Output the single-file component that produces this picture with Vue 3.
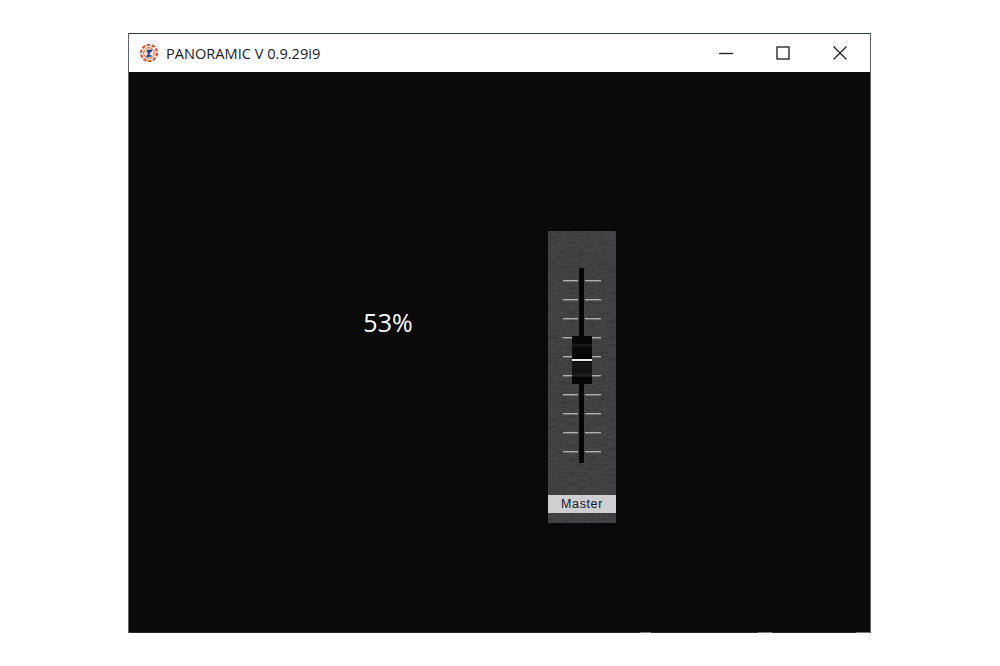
<template>
  <div class="desktop">
    <div class="window">
      <div class="titlebar">
        <svg class="app-icon" width="20" height="20" viewBox="0 0 20 20">
          <circle cx="10" cy="10" r="8" fill="#fff" stroke="#d9542f" stroke-width="2.2" stroke-dasharray="3.4 1.6" />
          <circle cx="10" cy="10" r="5.4" fill="#fbe3d6" stroke="#e8693a" stroke-width="1" />
          <path d="M7 14.5 L9.4 9.6 L7.6 9.4 L8 6.8 L13.6 6.4 L12.4 9 L11 9.4 L10.4 12 L13 12.4 L12.6 13.6 Z" fill="#1f3f9c" />
        </svg>
        <span class="title">PANORAMIC V 0.9.29i9</span>
        <div class="controls">
          <button class="ctl">
            <svg width="14" height="14" viewBox="0 0 14 14"><path d="M0 7.5H14" stroke="#1a1a1a" stroke-width="1.3" /></svg>
          </button>
          <button class="ctl">
            <svg width="14" height="14" viewBox="0 0 14 14"><rect x="1" y="1" width="12" height="12" fill="none" stroke="#1a1a1a" stroke-width="1.3" /></svg>
          </button>
          <button class="ctl">
            <svg width="16" height="16" viewBox="0 0 16 16"><path d="M1.5 1.5L14.5 14.5M14.5 1.5L1.5 14.5" stroke="#1a1a1a" stroke-width="1.2" /></svg>
          </button>
        </div>
      </div>
      <div class="stage">
        <div class="percent">{{ level }}%</div>
        <div class="strip">
          <svg class="grain" width="68" height="292">
            <filter id="brushed" color-interpolation-filters="sRGB">
              <feTurbulence type="fractalNoise" baseFrequency="0.1 0.6" numOctaves="3" seed="7" />
              <feColorMatrix values="0 0 0 0 0.18  0 0 0 0 0.18  0 0 0 0 0.19  2 0 0 0 -0.85" />
            </filter>
            <rect width="68" height="292" fill="#444447" />
            <rect width="68" height="292" filter="url(#brushed)" opacity="0.7" />
          </svg>
          <div class="rail">
            <div class="ticks">
              <div v-for="n in 10" :key="n" class="tick"></div>
            </div>
            <div class="track"></div>
            <div class="knob">
              <div class="knob-line"></div>
            </div>
          </div>
          <div class="name">Master</div>
        </div>
      </div>
      <div class="edge"></div>
    </div>
  </div>
</template>

<script setup>
const level = 53
</script>

<style>
html,
body {
  margin: 0;
  background: #fff;
}
</style>

<style scoped>
.desktop {
  width: 1000px;
  height: 666px;
  padding: 33px 0 0 128px;
  box-sizing: border-box;
  overflow: hidden;
  background: #fff;
}

.window {
  width: 743px;
  height: 600px;
  box-sizing: border-box;
  border: 1px solid #5f6366;
  border-top-color: #2c3a44;
  border-bottom: none;
  display: flex;
  flex-direction: column;
  font-family: "Open Sans", "Noto Sans", sans-serif;
}

.titlebar {
  height: 38px;
  flex: none;
  display: flex;
  align-items: center;
  background: #fff;
  padding-left: 10px;
}

.app-icon {
  margin-right: 7px;
}

.title {
  font-size: 14.6px;
  letter-spacing: 0;
  color: #1b1b1f;
}

.controls {
  margin-left: auto;
  margin-right: 2px;
  display: flex;
}

.ctl {
  width: 57px;
  height: 38px;
  padding: 0;
  border: none;
  background: none;
  display: flex;
  align-items: center;
  justify-content: center;
}

.stage {
  flex: 1;
  background: #0a0a0b;
  display: flex;
  align-items: flex-start;
}

.edge {
  height: 1px;
  flex: none;
  background: linear-gradient(
    to right,
    #5f6366 0,
    #2a2a2c 2px,
    #2a2a2c 511px,
    #7a7a7c 511px,
    #7a7a7c 522px,
    #2a2a2c 522px,
    #2a2a2c 629px,
    #7a7a7c 629px,
    #7a7a7c 643px,
    #2a2a2c 643px,
    #2a2a2c 727px,
    #7a7a7c 727px
  );
}

.percent {
  width: 100px;
  margin: 234px 0 0 209px;
  text-align: center;
  color: #fff;
  font-size: 25px;
  line-height: 32px;
}

.strip {
  position: relative;
  width: 68px;
  height: 292px;
  margin: 159px 0 0 110px;
  display: flex;
  flex-direction: column;
  align-items: center;
  background: #444447;
}

.grain {
  position: absolute;
  left: 0;
  top: 0;
}

.rail {
  position: relative;
  width: 100%;
  height: 195px;
  margin-top: 37px;
}

.ticks {
  display: flex;
  flex-direction: column;
  gap: 17px;
  padding-top: 12px;
  align-items: center;
}

.tick {
  width: 38px;
  height: 2px;
  background: linear-gradient(#b0b0b2 50%, #6e6e72 50%);
}

.track {
  position: absolute;
  left: 30px;
  top: 0;
  width: 5px;
  height: 195px;
  background: #050505;
  border: solid #424245;
  border-width: 0 1px;
}

.knob {
  position: absolute;
  left: 24px;
  top: 68px;
  width: 20px;
  height: 48px;
  background: linear-gradient(
    #060606 0,
    #060606 8px,
    #1d1d1d 8px,
    #0a0a0a 12px,
    #050505 21px,
    #0a0a0a 25px,
    #181818 28px,
    #101010 36px,
    #262626 40px,
    #060606 41px,
    #060606 48px
  );
}

.knob-line {
  position: relative;
  top: 23px;
  height: 2px;
  background: #e8e8e8;
}

.name {
  position: relative;
  width: 100%;
  height: 18px;
  margin-top: 32px;
  background: #cfcfd1;
  color: #14172a;
  font-family: "Liberation Sans", sans-serif;
  font-size: 12.5px;
  line-height: 18px;
  text-align: center;
  letter-spacing: 0.6px;
}
</style>
